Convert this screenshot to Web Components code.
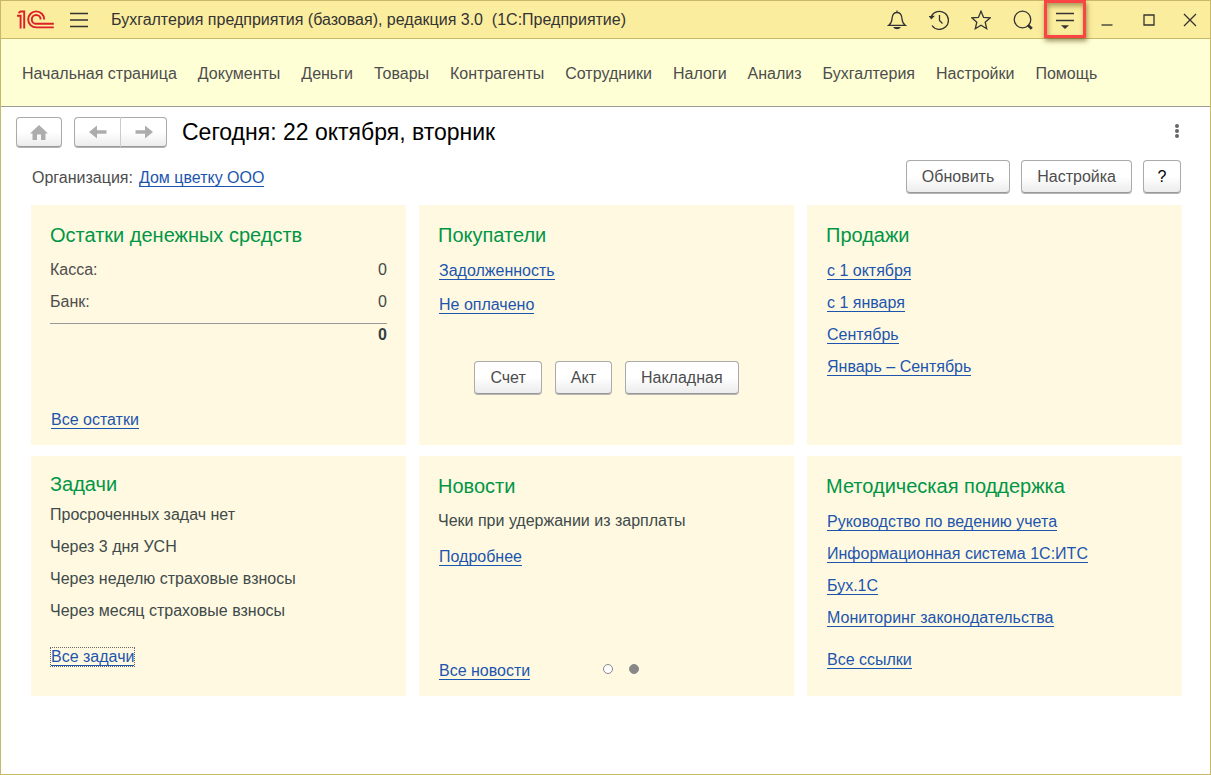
<!DOCTYPE html>
<html lang="ru">
<head>
<meta charset="utf-8">
<title>Бухгалтерия предприятия (базовая), редакция 3.0</title>
<style>
  body { margin: 0; font: 16px/20px "Liberation Sans", Arial, sans-serif; color: #4d4d4d; }
</style>
</head>
<body>
<app-window>
  <title-bar slot="title">Бухгалтерия предприятия (базовая), редакция 3.0 &nbsp;(1С:Предприятие)</title-bar>
  <section-menu slot="menu"></section-menu>
  <page-header slot="content">Сегодня: 22 октября, вторник</page-header>
  <org-bar slot="content">
    <text-link>Дом цветку ООО</text-link>
    <push-button slot="actions">Обновить</push-button>
    <push-button slot="actions">Настройка</push-button>
    <push-button slot="actions" help>?</push-button>
  </org-bar>
  <card-grid slot="content">
    <info-card heading="Остатки денежных средств">
      <balance-table></balance-table>
      <text-link slot="footer">Все остатки</text-link>
    </info-card>
    <info-card heading="Покупатели">
      <card-row roomy><text-link>Задолженность</text-link></card-row>
      <card-row roomy><text-link>Не оплачено</text-link></card-row>
      <button-row>
        <push-button>Счет</push-button>
        <push-button>Акт</push-button>
        <push-button>Накладная</push-button>
      </button-row>
    </info-card>
    <info-card heading="Продажи" list>
      <card-row><text-link>с 1 октября</text-link></card-row>
      <card-row><text-link>с 1 января</text-link></card-row>
      <card-row><text-link>Сентябрь</text-link></card-row>
      <card-row><text-link>Январь – Сентябрь</text-link></card-row>
    </info-card>
    <info-card heading="Задачи" compact>
      <card-row>Просроченных задач нет</card-row>
      <card-row>Через 3 дня УСН</card-row>
      <card-row>Через неделю страховые взносы</card-row>
      <card-row>Через месяц страховые взносы</card-row>
      <card-row last><text-link current>Все задачи</text-link></card-row>
    </info-card>
    <info-card heading="Новости">
      <card-row>Чеки при удержании из зарплаты</card-row>
      <card-row tall><text-link>Подробнее</text-link></card-row>
      <text-link slot="footer">Все новости</text-link>
      <page-dots slot="footer"></page-dots>
    </info-card>
    <info-card heading="Методическая поддержка" list>
      <card-row><text-link>Руководство по ведению учета</text-link></card-row>
      <card-row><text-link>Информационная система 1С:ИТС</text-link></card-row>
      <card-row><text-link>Бух.1С</text-link></card-row>
      <card-row><text-link>Мониторинг законодательства</text-link></card-row>
      <card-row last><text-link>Все ссылки</text-link></card-row>
    </info-card>
  </card-grid>
</app-window>

<script>
function define(name, html, setup) {
  customElements.define(name, class extends HTMLElement {
    constructor() {
      super();
      this.attachShadow({ mode: "open" }).innerHTML = html;
    }
    connectedCallback() {
      if (setup) setup(this, this.shadowRoot);
    }
  });
}

define("app-window", `
  <style>
    :host { display: flex; flex-direction: column; box-sizing: border-box; min-height: 100vh; border: 1px solid #c8b969; background: #fff; }
    main { flex: 1; padding-bottom: 24px; }
  </style>
  <slot name="title"></slot>
  <slot name="menu"></slot>
  <main><slot name="content"></slot></main>`);

define("title-bar", `
  <style>
    :host { display: block; background: #fbed9e; border-bottom: 1px solid #c8b969; color: #333; }
    header { display: flex; align-items: center; height: 37px; padding-left: 15px; }
    .logo { width: 40px; height: 20px; }
    .title { flex: 1; margin-left: 12px; white-space: nowrap; }
    button { position: relative; display: flex; align-items: center; justify-content: center; width: 42px; height: 37px; padding: 0; border: 0; background: none; color: #333; }
    .burger { width: 40px; margin-left: 3px; }
    .close { width: 40px; }
    .marked::after { content: ""; position: absolute; inset: -1px 0 0; border: 3px solid #fb4444; box-shadow: 1px 3px 5px rgba(90,70,20,.6), inset 1px 3px 5px rgba(90,70,20,.5); }
    svg { display: block; fill: none; stroke: currentColor; stroke-width: 1.3; }
    .solid { fill: currentColor; }
  </style>
  <header>
    <svg class="logo" viewBox="0 0 40 20" role="img" aria-label="1С" style="stroke:#dc1f28;stroke-width:1.9">
      <path d="M1 5.800H4.600V18.500M2.500 3L4.600 1.500H8.200V18.500"/>
      <path d="M28.200 9.400A8 8 0 1 0 20.200 17.400H37.800"/>
      <path d="M24.600 9.400A4.400 4.400 0 1 0 20.200 13.800H37.800"/>
    </svg>
    <button class="burger" aria-label="Главное меню"><svg width="20" height="16" viewBox="0 0 20 16"><path d="M1 1.500H19M1 8H19M1 14.500H19"/></svg></button>
    <span class="title"><slot></slot></span>
    <button aria-label="Оповещения"><svg width="20" height="20" viewBox="0 0 20 20"><path d="M10 .5V2.500M1.800 15.300H18.200C15 13 15.200 10.500 14.800 7.500C14.400 4.200 12.500 2.500 10 2.500S5.600 4.200 5.200 7.500C4.800 10.500 5 13 1.800 15.300Z"/><path class="solid" stroke="none" d="M6 17H14Q12.500 19.300 10 19.300T6 17Z"/></svg></button>
    <button aria-label="История"><svg width="20" height="20" viewBox="0 0 20 20"><path d="M2.300 6.500A9 9 0 1 1 3 15.500M10.500 5V10.500L13.500 13.500"/><path class="solid" stroke="none" d="M-.2 6L6 5.700L2.200 9.500Z"/></svg></button>
    <button aria-label="Избранное"><svg width="20" height="20" viewBox="0 0 20 20"><path d="M10 1.200L12.600 7.400L19.100 7.900L14.200 12.200L15.700 18.700L10 15.300L4.300 18.700L5.800 12.200L.9 7.900L7.400 7.400Z"/></svg></button>
    <button aria-label="Поиск"><svg width="20" height="20" viewBox="0 0 20 20"><circle cx="9.500" cy="9.500" r="8.300"/><path stroke-width="2.800" d="M14.800 15L18.800 18.800"/></svg></button>
    <button class="marked" aria-label="Настройки окна"><svg width="20" height="18" viewBox="0 0 20 18"><path d="M1 2.500H19M1 9.500H19"/><path class="solid" stroke="none" d="M6 14.200H14L10 18Z"/></svg></button>
    <button aria-label="Свернуть"><svg width="12" height="12" viewBox="0 0 12 12"><path d="M.5 11H11.500"/></svg></button>
    <button aria-label="Развернуть"><svg width="12" height="12" viewBox="0 0 12 12"><path d="M1 1H11V11H1Z"/></svg></button>
    <button class="close" aria-label="Закрыть"><svg width="14" height="14" viewBox="0 0 14 14"><path d="M1 1L13 13M13 1L1 13"/></svg></button>
  </header>`);

define("section-menu", `
  <style>
    :host { display: block; background: #ffffd5; border-bottom: 1px solid #9d9d93; }
    nav { display: flex; flex-wrap: wrap; align-items: center; column-gap: 21px; box-sizing: border-box; min-height: 67px; padding: 2px 21px 0; }
    a { color: #4d4d4d; text-decoration: none; white-space: nowrap; }
  </style>
  <nav></nav>`, (host, root) => {
    const names = ["Начальная страница", "Документы", "Деньги", "Товары", "Контрагенты", "Сотрудники", "Налоги", "Анализ", "Бухгалтерия", "Настройки", "Помощь"];
    root.querySelector("nav").innerHTML = names.map(n => `<a href="#">${n}</a>`).join("");
  });

const buttonFace = "border: 1px solid #aaa; border-bottom-color: #999; border-radius: 4px; background: linear-gradient(#fff 50%, #ececec); box-shadow: 0 1px #b4b4b0;";

define("page-header", `
  <style>
    :host { display: block; }
    header { display: flex; align-items: center; padding: 10px 23px 1px 15px; }
    button { display: flex; align-items: center; justify-content: center; box-sizing: border-box; width: 46px; height: 30px; padding: 0; ${buttonFace} }
    .pair { display: flex; margin: 0 15px 0 12px; }
    .back { width: 47px; border-right-color: #ccc; border-radius: 4px 0 0 4px; }
    .next { border-left: 0; border-radius: 0 4px 4px 0; }
    h1 { flex: 1; margin: 0; font-size: 23px; line-height: 28px; font-weight: 400; color: #000; }
    .more { align-items: flex-start; width: 20px; padding-top: 7px; border: 0; background: none; box-shadow: none; }
    svg { display: block; fill: #adadad; }
    .more svg { fill: #666; }
  </style>
  <header>
    <button aria-label="Начальная страница"><svg width="18" height="15" viewBox="0 0 18 15"><path d="M9 0L18 8.500H15.500V15H11V9.500H7V15H2.500V8.500H0Z"/></svg></button>
    <div class="pair">
      <button class="back" aria-label="Назад"><svg width="18" height="14" viewBox="0 0 18 14"><path d="M0 7L8 .5V5.200H17.500V8.800H8V13.500Z"/></svg></button>
      <button class="next" aria-label="Вперед"><svg width="18" height="14" viewBox="0 0 18 14"><path d="M18 7L10 .5V5.200H.5V8.800H10V13.500Z"/></svg></button>
    </div>
    <h1><slot></slot></h1>
    <button class="more" aria-label="Еще"><svg width="4" height="14" viewBox="0 0 4 14"><circle cx="2" cy="2" r="2"/><circle cx="2" cy="7" r="2"/><circle cx="2" cy="12" r="2"/></svg></button>
  </header>`);

define("org-bar", `
  <style>
    :host { display: flex; align-items: center; justify-content: space-between; padding: 12px 29px 12px 31px; }
    div { display: flex; align-items: center; }
    .org { gap: 5px; padding-top: 2px; }
    .actions { gap: 11px; }
  </style>
  <div class="org"><span>Организация:</span><slot></slot></div>
  <div class="actions"><slot name="actions"></slot></div>`);

define("push-button", `
  <style>
    :host { display: block; }
    button { display: block; box-sizing: border-box; height: 33px; padding: 0 15px; font: inherit; color: #4d4d4d; white-space: nowrap; ${buttonFace} }
    :host([help]) button { width: 38px; padding: 0; color: #000; }
  </style>
  <button><slot></slot></button>`);

define("text-link", `
  <style>
    :host { display: block; }
    a { display: block; width: fit-content; margin: 1px; line-height: 17px; border-bottom: 1px solid #1c55ae; color: #1c55ae; text-decoration: none; white-space: nowrap; }
    :host([current]) a { outline: 1px dotted #666; }
  </style>
  <a href="#"><slot></slot></a>`);

define("card-grid", `
  <style>
    :host { display: grid; grid-template-columns: repeat(3, minmax(0, 1fr)); grid-auto-rows: minmax(240px, auto); gap: 11px 13px; padding: 0 28px 0 30px; }
  </style>
  <slot></slot>`);

define("info-card", `
  <style>
    :host { --last-gap: 10px; display: flex; flex-direction: column; box-sizing: border-box; padding: 18px 19px 15px; background: #fff9e1; }
    h2 { margin: 0 0 7px; font-size: 20px; line-height: 24px; font-weight: 400; color: #009646; }
    :host([list]) h2 { margin-bottom: 8px; }
    :host([compact]) { --last-gap: 14px; padding-top: 16px; }
    :host([compact]) h2 { margin-bottom: 3px; }
    footer { display: flex; align-items: center; gap: 72px; margin-top: auto; }
  </style>
  <h2></h2>
  <slot></slot>
  <footer><slot name="footer"></slot></footer>`, (host, root) => {
    root.querySelector("h2").textContent = host.getAttribute("heading");
  });

define("card-row", `
  <style>
    :host { display: flex; align-items: center; min-height: 32px; color: #404a4a; }
    :host([roomy]) { min-height: 34px; }
    :host([tall]) { min-height: 40px; }
    :host([last]) { margin-top: var(--last-gap); }
  </style>
  <slot></slot>`);

define("button-row", `
  <style>
    :host { display: flex; justify-content: center; gap: 13px; margin-top: 39px; }
  </style>
  <slot></slot>`);

define("balance-table", `
  <style>
    :host { display: block; }
    table { width: 100%; border-collapse: collapse; }
    th, td { height: 32px; padding: 0; font-weight: 400; text-align: left; }
    td { text-align: right; color: #404a4a; }
    tbody tr:last-child > * { padding-bottom: 5px; }
    tfoot td { height: 22px; border-top: 1px solid #999; font-weight: 700; color: #333f44; }
  </style>
  <table>
    <tbody>
      <tr><th scope="row">Касса:</th><td>0</td></tr>
      <tr><th scope="row">Банк:</th><td>0</td></tr>
    </tbody>
    <tfoot><tr><td colspan="2">0</td></tr></tfoot>
  </table>`);

define("page-dots", `
  <style>
    :host { display: flex; gap: 16px; padding-bottom: 4px; }
    button { box-sizing: border-box; width: 10px; height: 10px; padding: 0; border: 1px solid #888; border-radius: 50%; background: #fff; }
    button[aria-current] { background: #888; }
  </style>
  <button aria-label="Новость 1"></button>
  <button aria-label="Новость 2" aria-current="true"></button>`);
</script>
</body>
</html>
